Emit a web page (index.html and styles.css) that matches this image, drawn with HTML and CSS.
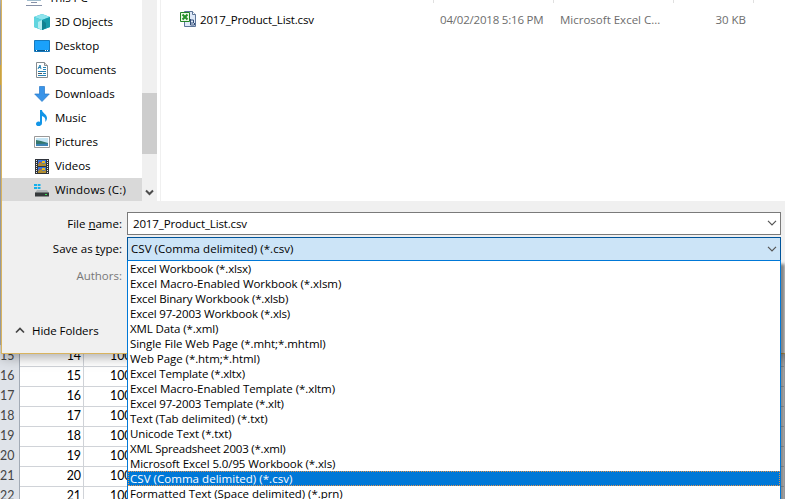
FILE: index.html
```
<!DOCTYPE html>
<html lang="en"><head><meta charset="utf-8"><title>Save As</title><link rel="stylesheet" href="styles.css"></head>
<body>
<main class="screen">
<section class="sheet">
<div class="row"><b>15</b><span>14</span><span>100</span><i></i></div>
<div class="row"><b>16</b><span>15</span><span>100</span><i></i></div>
<div class="row"><b>17</b><span>16</span><span>100</span><i></i></div>
<div class="row"><b>18</b><span>17</span><span>100</span><i></i></div>
<div class="row"><b>19</b><span>18</span><span>100</span><i></i></div>
<div class="row"><b>20</b><span>19</span><span>100</span><i></i></div>
<div class="row"><b>21</b><span>20</span><span>100</span><i></i></div>
<div class="row"><b>22</b><span>21</span><span>100</span><i></i></div>
</section>
<section class="dialog">
<div class="browser">
<nav class="tree">
<div class="item root"><svg width="18" height="16" viewBox="0 0 18 16"><path d="M2 1h14v9H2z" fill="#69b9e9" stroke="#477d9e"/><path d="M6 12.500h6M1 15.500h16" stroke="#8791a8"/></svg><span>This PC</span></div>
<div class="item"><svg width="16" height="16" viewBox="0 0 16 16"><path d="M0 3 8 0l8 3v10l-8 3-8-3z" fill="#19b5c9"/><path d="M0 3 8 0l8 3-8 3z" fill="#8ee4ed"/><path d="M0 3l8 3v10l-8-3z" fill="#61d5df"/><path d="M4 8l4-2v10l-4-2z" fill="#b2edf1"/><path d="M8 6l8-3v10l-8 3z" fill="#159bab"/><path d="M8 6l4 3v5l-4 2z" fill="#0e8292"/></svg><span>3D Objects</span></div>
<div class="item"><svg width="16" height="16" viewBox="0 0 16 16"><path d="M.5 2.500h15v11H.5z" fill="#1aa1fa" stroke="#1679bd"/><path d="M1 12.500h14" stroke="#07598f"/><path d="M2 12.500h1m8 0h1m1 0h1" stroke="#fff"/></svg><span>Desktop</span></div>
<div class="item"><svg width="16" height="16" viewBox="0 0 16 16"><path d="M2.500.5h8l3 3v12h-11z" fill="#fff" stroke="#858c90"/><path d="M10.500.5v3h3" fill="#ddd" stroke="#858c90"/><path d="m4 7 2-4 1 4M4.500 5.500h2M9 5.500h3M9 7.500h3M4 9.500h8M4 13.500h8" fill="none" stroke="#2682b4"/><path d="M4 11.500h4" stroke="#555"/><path d="M9 11.500h3" stroke="#2682b4"/></svg><span>Documents</span></div>
<div class="item"><svg width="16" height="16" viewBox="0 0 16 16"><path d="M5.500.5h5V8h4.800L8 15.500.7 8h4.800z" fill="#3994e8" stroke="#2779c8" stroke-width=".7"/></svg><span>Downloads</span></div>
<div class="item"><svg width="16" height="16" viewBox="0 0 16 16"><path d="M6 0h2c0 3 5 4 5 8 0 2-1 3-2 4 1-3 0-5-3-6v7c0 4-6 4-6 1 0-2 2-3 4-2z" fill="#1295e7"/></svg><span>Music</span></div>
<div class="item"><svg width="16" height="16" viewBox="0 0 16 16"><path d="M.5 2.500h15v11H.5z" fill="#fff" stroke="#999"/><path d="M2 4h12v8H2z" fill="#c6e6f5"/><path d="M2 6l5 1 7 2v3H2z" fill="#35776c"/><path d="M2 10l12-.5V12H2z" fill="#3d83b5"/></svg><span>Pictures</span></div>
<div class="item"><svg width="16" height="16" viewBox="0 0 16 16"><path d="M1 1h14v15H1z" fill="#30343b"/><path d="M2.500 2v13M13.500 2v13" stroke="#eee" stroke-dasharray="1 1"/><path d="M4 2h8v6H4zm0 7h8v6H4z" fill="#3975d8"/><path d="M4 6l3-2 2 2 3-1v3H4zm0 7 3-2 2 2 3-1v3H4z" fill="#b18d2f"/><path d="M8 3h3v2H8zm0 7h3v2H8z" fill="#ecb922"/><path d="M5 4h2v1H5zm0 7h2v1H5z" fill="#d5453d"/></svg><span>Videos</span></div>
<div class="item selected"><svg width="16" height="16" viewBox="0 0 16 16"><path d="M0 2h3v2H0zm3.700 0H6.500v2H3.700zM0 5h3v2H0zm3.700 0H6.500v2H3.700z" fill="#14afea"/><path d="m3 8-2 3h14l-2-3z" fill="#aeb3b5"/><path d="M1 10.500h14v4H1z" fill="#35393b"/><path d="M11 12.500h2" stroke="#36e554"/></svg><span>Windows (C:)</span></div>
</nav>
<div class="scroll"><div class="thumb"></div><svg width="15" height="23" viewBox="0 0 15 23"><path d="m4 12.500 3.500 3.500L11 12.500" fill="none" stroke="#4d4d4d" stroke-width="2"/></svg></div>
<div class="files">
<div class="heads"><i></i><i></i><i></i><i></i></div>
<div class="file"><svg width="16" height="16" viewBox="0 0 16 16"><path d="M4.500.5h8l3 3v12h-11z" fill="#dfe9f8" stroke="#5d7599"/><path d="M12.500.5v3h3" fill="#fff" stroke="#5d7599"/><path d="M.5 1.500h9v9h-9z" fill="#eef8e9" stroke="#238527"/><path d="m2.500 3.500 5 5m0-5-5 5" stroke="#249129" stroke-width="2"/><path d="M10.500 8v4h3v-3h-3v5h4v-2" fill="none" stroke="#334e78"/></svg><span class="fname">2017_Product_List.csv</span><span class="date">04/02/2018 5:16 PM</span><span class="type">Microsoft Excel C...</span><span class="size">30 KB</span></div>
</div>
</div>
<div class="form">
<label>File <u>n</u>ame:</label><div class="combo name"><span>2017_Product_List.csv</span><svg width="10" height="6" viewBox="0 0 10 6"><path d="m1 .8 4 4 4-4" fill="none" stroke="#555" stroke-width="1.200"/></svg></div>
<label>Save as <u>t</u>ype:</label><div class="combo kind"><span>CSV (Comma delimited) (*.csv)</span><svg width="10" height="6" viewBox="0 0 10 6"><path d="m1 .8 4 4 4-4" fill="none" stroke="#555" stroke-width="1.200"/></svg></div>
<label class="authors">Authors:</label>
</div>
<div class="hide"><svg width="10" height="7" viewBox="0 0 10 7"><path d="m1 5.500 4-4 4 4" fill="none" stroke="#444" stroke-width="1.700"/></svg><span>Hide Folders</span></div>
</section>
<div class="menu">
<div><span>Excel Workbook (*.xlsx)</span></div>
<div><span>Excel Macro-Enabled Workbook (*.xlsm)</span></div>
<div><span>Excel Binary Workbook (*.xlsb)</span></div>
<div><span>Excel 97-2003 Workbook (*.xls)</span></div>
<div><span>XML Data (*.xml)</span></div>
<div><span>Single File Web Page (*.mht;*.mhtml)</span></div>
<div><span>Web Page (*.htm;*.html)</span></div>
<div><span>Excel Template (*.xltx)</span></div>
<div><span>Excel Macro-Enabled Template (*.xltm)</span></div>
<div><span>Excel 97-2003 Template (*.xlt)</span></div>
<div><span>Text (Tab delimited) (*.txt)</span></div>
<div><span>Unicode Text (*.txt)</span></div>
<div><span>XML Spreadsheet 2003 (*.xml)</span></div>
<div><span>Microsoft Excel 5.0/95 Workbook (*.xls)</span></div>
<div class="active"><span>CSV (Comma delimited) (*.csv)</span></div>
<div><span>Formatted Text (Space delimited) (*.prn)</span></div>
</div>
</main>
</body></html>
```
FILE: styles.css
```
*{box-sizing:border-box}
body{margin:0;font:11.5px/15px "Open Sans","Noto Sans",sans-serif;color:#000}
svg{display:block;flex:none}
.screen{position:relative;width:785px;height:499px;overflow:hidden;background:#fff}
.sheet{padding-top:345px;height:520px;background:linear-gradient(#f1c34e,#f1c34e) 0 65px/1px 20px no-repeat,linear-gradient(#b4b8bd,#b4b8bd) 0 0/1px 354px no-repeat}
.row{display:grid;grid-template-columns:20px 64px 43px 1fr;height:20px;font:12.4px/21px Lato,sans-serif}
.row>*{border-right:1px solid #d0d3d8;border-bottom:1px solid #d0d3d8}
.row b{font-weight:400;color:#444;background:#dfe3e9;border-color:#a3abb6}
.row span{text-align:right;padding-right:2px}
.row span+span{text-align:left;padding:0 0 0 26px;border-right:0;overflow:hidden}
.dialog{position:absolute;left:1px;top:0;width:790px;height:354px;background:#f0f0f0;border:solid #d9b45f;border-width:0 0 1px 1px;box-shadow:0 3px 12px rgba(0,0,0,.35)}
.browser{height:201px;display:flex;overflow:hidden;background:#fff}
.tree{width:140px;margin-top:-14px;flex:none}
.item{display:flex;align-items:center;gap:5px;height:24px;padding-left:32px;white-space:nowrap}
.item span{padding-bottom:2px;letter-spacing:-.03px}
.item.root{padding-left:23px;gap:6px}
.selected{background:#d9d9d9}
.item.selected span{letter-spacing:.17px}
.scroll{width:15px;background:#f0f0f0;display:flex;flex-direction:column;justify-content:space-between;padding-top:93px;flex:none}
.thumb{height:61px;background:#cdcdcd}
.files{margin-left:3px;border-left:1px solid #f0f0f0;flex:1}
.heads{display:flex;height:3px;padding-left:272px}
.heads i{width:120px;border-left:1px solid #e0e0e0}
.heads i:nth-child(3){width:80px}
.file{display:grid;grid-template-columns:20px 240px 120px 120px 66px;height:32px;align-items:center;padding-left:19px;color:#6d6d6d;white-space:nowrap}
.fname,.name span{color:#000;letter-spacing:-.14px}
.date{letter-spacing:-.2px}
.size{text-align:right}
.form{display:grid;grid-template-columns:120px 654px;column-gap:5px;row-gap:2px;padding-top:11px}
.form label{text-align:right;line-height:23px;white-space:nowrap}
u{text-underline-offset:1px}
.combo{height:23px;border:1px solid #7a7a7a;background:#fff;display:flex;align-items:center;justify-content:space-between;padding:0 3px 1px 5px}
.combo.kind{height:24px;background:#cce4f7;border-color:#00549a;padding:0 3px 1px 3px}
.kind span{letter-spacing:.04px}
.form .authors{line-height:25px;color:#787878}
.hide{display:flex;align-items:center;gap:7px;margin:35px 0 0 13px;letter-spacing:-.06px}
.menu{position:absolute;left:127px;top:260px;width:654px;height:260px;background:#fff;border:1px solid #0078d7;box-shadow:4px 4px 3px rgba(0,0,0,.45)}
.menu div{height:15px;line-height:15px;padding-left:2px;white-space:nowrap;letter-spacing:-.06px}
.menu div:nth-child(1),.menu div:nth-child(3),.menu div:nth-child(4),.menu div:nth-child(8),.menu div:nth-child(10){letter-spacing:-.17px}
.menu div:nth-child(13){letter-spacing:-.21px}
.menu div:nth-child(5),.menu div:nth-child(12),.menu div:nth-child(14){letter-spacing:-.1px}
.menu .active{background:#0078d7;color:#fff;outline:1px dotted #e2934d;outline-offset:-1px;letter-spacing:.04px}
```
